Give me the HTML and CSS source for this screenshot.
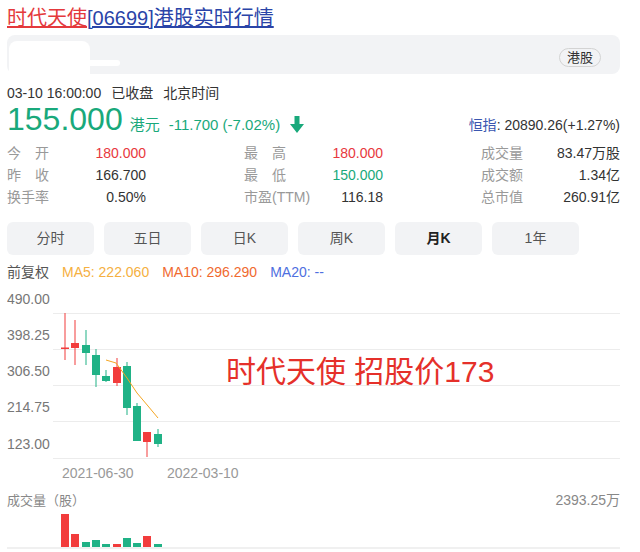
FILE: index.html
```html
<!DOCTYPE html>
<html lang="zh-CN">
<head>
    <meta charset="UTF-8">
    <meta name="viewport" content="width=device-width, initial-scale=1.0">
    <title>时代天使[06699]港股实时行情</title>
    <link rel="stylesheet" href="styles.css">
</head>
<body>
    <div class="page">
        <h1 class="title"><a class="name">时代天使</a><a class="code">[06699]港股实时行情</a></h1>

        <div class="info-bar">
            <span class="mask"></span>
            <span class="mask-tail"></span>
            <span class="badge">港股</span>
        </div>

        <div class="time-row">
            <span>03-10 16:00:00</span>
            <span>已收盘</span>
            <span>北京时间</span>
        </div>

        <div class="price-row">
            <span class="price">155.000</span>
            <span class="unit">港元</span>
            <span class="change">-11.700 (-7.02%)</span>
            <svg class="arrow" width="14" height="17" viewBox="0 0 14 17">
                <path d="M4.5 0h5v8h4.5L7 17 0 8h4.5z" fill="#19a97b"/>
            </svg>
            <span class="index"><span class="index-name">恒指</span>: 20890.26(+1.27%)</span>
        </div>

        <!-- 行情数据 -->
        <div class="stats">
            <div class="stat-col">
                <div class="stat"><span class="label">今 开</span><span class="value up">180.000</span></div>
                <div class="stat"><span class="label">昨 收</span><span class="value">166.700</span></div>
                <div class="stat"><span class="label">换手率</span><span class="value">0.50%</span></div>
            </div>
            <div class="stat-col">
                <div class="stat"><span class="label">最 高</span><span class="value up">180.000</span></div>
                <div class="stat"><span class="label">最 低</span><span class="value down">150.000</span></div>
                <div class="stat"><span class="label wide">市盈(TTM)</span><span class="value">116.18</span></div>
            </div>
            <div class="stat-col">
                <div class="stat"><span class="label">成交量</span><span class="value">83.47万股</span></div>
                <div class="stat"><span class="label">成交额</span><span class="value">1.34亿</span></div>
                <div class="stat"><span class="label">总市值</span><span class="value">260.91亿</span></div>
            </div>
        </div>

        <div class="tabs">
            <div class="tab">分时</div>
            <div class="tab">五日</div>
            <div class="tab">日K</div>
            <div class="tab">周K</div>
            <div class="tab active">月K</div>
            <div class="tab">1年</div>
        </div>

        <div class="ma-row">
            <span class="fq">前复权</span>
            <span class="ma5">MA5: 222.060</span>
            <span class="ma10">MA10: 296.290</span>
            <span class="ma20">MA20: --</span>
        </div>

        <!-- K线图 -->
        <div class="chart">
            <svg width="613" height="200" viewBox="0 0 613 200">
                <g fill="#ececec">
                    <rect x="46" y="31" width="567" height="1"/>
                    <rect x="46" y="67" width="567" height="1"/>
                    <rect x="46" y="103" width="567" height="1"/>
                    <rect x="46" y="139" width="567" height="1"/>
                    <rect x="46" y="176" width="567" height="1"/>
                </g>
                <g class="axis">
                    <text x="0" y="22">490.00</text>
                    <text x="0" y="58">398.25</text>
                    <text x="0" y="94">306.50</text>
                    <text x="0" y="130">214.75</text>
                    <text x="0" y="167">123.00</text>
                </g>
                <g class="dates">
                    <text x="55" y="196">2021-06-30</text>
                    <text x="160" y="196">2022-03-10</text>
                </g>
                <g fill="#f23c3c">
                    <rect x="57.5" y="31" width="1" height="47"/>
                    <rect x="54" y="65.5" width="8" height="1.5"/>
                    <rect x="67.5" y="38" width="1" height="45"/>
                    <rect x="64" y="61" width="8" height="5"/>
                    <rect x="109.5" y="76" width="1" height="28"/>
                    <rect x="106" y="85" width="8" height="16"/>
                    <rect x="139.5" y="150" width="1" height="25"/>
                    <rect x="136" y="150" width="8" height="10"/>
                </g>
                <g fill="#20b286">
                    <rect x="78.5" y="48" width="1" height="35"/>
                    <rect x="75" y="63" width="8" height="8"/>
                    <rect x="88.5" y="67" width="1" height="38"/>
                    <rect x="85" y="73" width="8" height="20"/>
                    <rect x="98.5" y="88" width="1" height="12"/>
                    <rect x="95" y="94" width="8" height="5"/>
                    <rect x="119.5" y="80" width="1" height="53"/>
                    <rect x="116" y="84" width="8" height="42"/>
                    <rect x="129.5" y="121" width="1" height="38"/>
                    <rect x="126" y="124" width="8" height="35"/>
                    <rect x="150.5" y="147" width="1" height="18"/>
                    <rect x="147" y="152" width="8" height="10"/>
                </g>
                <polyline points="99,78 109,81 120,96 130,111 141,124 151,136" fill="none" stroke="#f5a623" stroke-width="1"/>
            </svg>
            <span class="note">时代天使 招股价173</span>
        </div>

        <div class="volume-head">
            <span class="volume-label">成交量（股）</span>
            <span class="volume-max">2393.25万</span>
        </div>

        <svg class="volume" width="613" height="40" viewBox="0 0 613 40">
            <rect x="0" y="36" width="613" height="2" fill="#f0f0f0"/>
            <g fill="#f23c3c">
                <rect x="54" y="3" width="8" height="33"/>
                <rect x="64" y="23" width="8" height="13"/>
                <rect x="106" y="33" width="8" height="3"/>
                <rect x="136" y="25" width="8" height="11"/>
            </g>
            <g fill="#20b286">
                <rect x="75" y="31" width="8" height="5"/>
                <rect x="85" y="29" width="8" height="7"/>
                <rect x="95" y="33" width="8" height="3"/>
                <rect x="116" y="27" width="8" height="9"/>
                <rect x="126" y="32" width="8" height="4"/>
                <rect x="147" y="33" width="8" height="3"/>
            </g>
        </svg>
    </div>
</body>
</html>
```

FILE: styles.css
```css
body {
    margin: 0;
    font-family: "Liberation Sans", "Noto Sans CJK SC", sans-serif;
    color: #333;
    background-color: #fff;
}
.page {
    padding: 6px 20px 0 7px;
}
.title {
    margin: 0;
    height: 24px;
    font-size: 20px;
    font-weight: normal;
    line-height: 24px;
}
.title a {
    text-decoration: underline;
}
.name {
    color: #e4393c;
}
.code {
    color: #2a44a8;
}
.info-bar {
    position: relative;
    margin-top: 5px;
    height: 39px;
    padding: 0 19px 7px 0;
    box-sizing: border-box;
    display: flex;
    align-items: flex-end;
    justify-content: flex-end;
    background-color: #f2f3f5;
    border-radius: 8px;
}
.mask {
    position: absolute;
    left: 2px;
    top: 6px;
    width: 81px;
    height: 33px;
    background-color: #fff;
    border-radius: 8px 8px 0 0;
}
.mask-tail {
    position: absolute;
    left: 78px;
    top: 25px;
    width: 35px;
    height: 6px;
    background-color: #fff;
    border-radius: 3px;
}
.badge {
    height: 19px;
    padding: 0 7px;
    box-sizing: border-box;
    border: 1px solid #d3d3d3;
    border-radius: 10px;
    font-size: 13px;
    line-height: 17px;
    color: #333;
}
.time-row {
    margin-top: 10px;
    display: flex;
    gap: 10px;
    font-size: 14px;
    line-height: 18px;
}
.price-row {
    height: 34px;
    display: flex;
    align-items: baseline;
    line-height: 34px;
    color: #19a97b;
}
.price {
    font-size: 32px;
}
.unit {
    margin-left: 7px;
    font-size: 15px;
}
.change {
    margin-left: 9px;
    font-size: 15px;
}
.arrow {
    align-self: flex-end;
    margin: 0 0 3px 10px;
}
.index {
    margin-left: auto;
    font-size: 14px;
    color: #333;
}
.index-name {
    color: #3a56b0;
}
.stats {
    margin-top: 6px;
    display: flex;
    justify-content: space-between;
    font-size: 14px;
    line-height: 22px;
}
.stat-col {
    width: 139px;
}
.stat {
    display: flex;
    justify-content: space-between;
}
.label {
    width: 42px;
    color: #999;
    text-align-last: justify;
}
.label.wide {
    width: auto;
    text-align-last: auto;
}
.value.up {
    color: #e8383d;
}
.value.down {
    color: #19a97b;
}
.tabs {
    margin-top: 14px;
    display: flex;
    gap: 10px;
}
.tab {
    width: 87px;
    height: 33px;
    line-height: 33px;
    text-align: center;
    font-size: 14px;
    color: #555;
    background-color: #f2f3f5;
    border-radius: 6px;
}
.tab.active {
    font-weight: bold;
    color: #222;
}
.ma-row {
    margin-top: 7px;
    display: flex;
    gap: 13px;
    font-size: 14px;
    line-height: 20px;
}
.fq {
    color: #555;
}
.ma5 {
    color: #f5b041;
}
.ma10 {
    color: #f06a2f;
}
.ma20 {
    color: #4e6fe0;
}
.chart {
    position: relative;
    height: 200px;
}
.chart svg {
    display: block;
}
.axis text {
    font-size: 14px;
    fill: #777;
}
.dates text {
    font-size: 14px;
    fill: #999;
}
.note {
    position: absolute;
    left: 219px;
    top: 72px;
    font-size: 30px;
    line-height: 36px;
    color: #e5302a;
}
.volume-head {
    margin-top: 8px;
    display: flex;
    justify-content: space-between;
    align-items: baseline;
    line-height: 20px;
    color: #888;
}
.volume-label {
    font-size: 13px;
}
.volume-max {
    font-size: 14px;
}
.volume {
    display: block;
}
```
